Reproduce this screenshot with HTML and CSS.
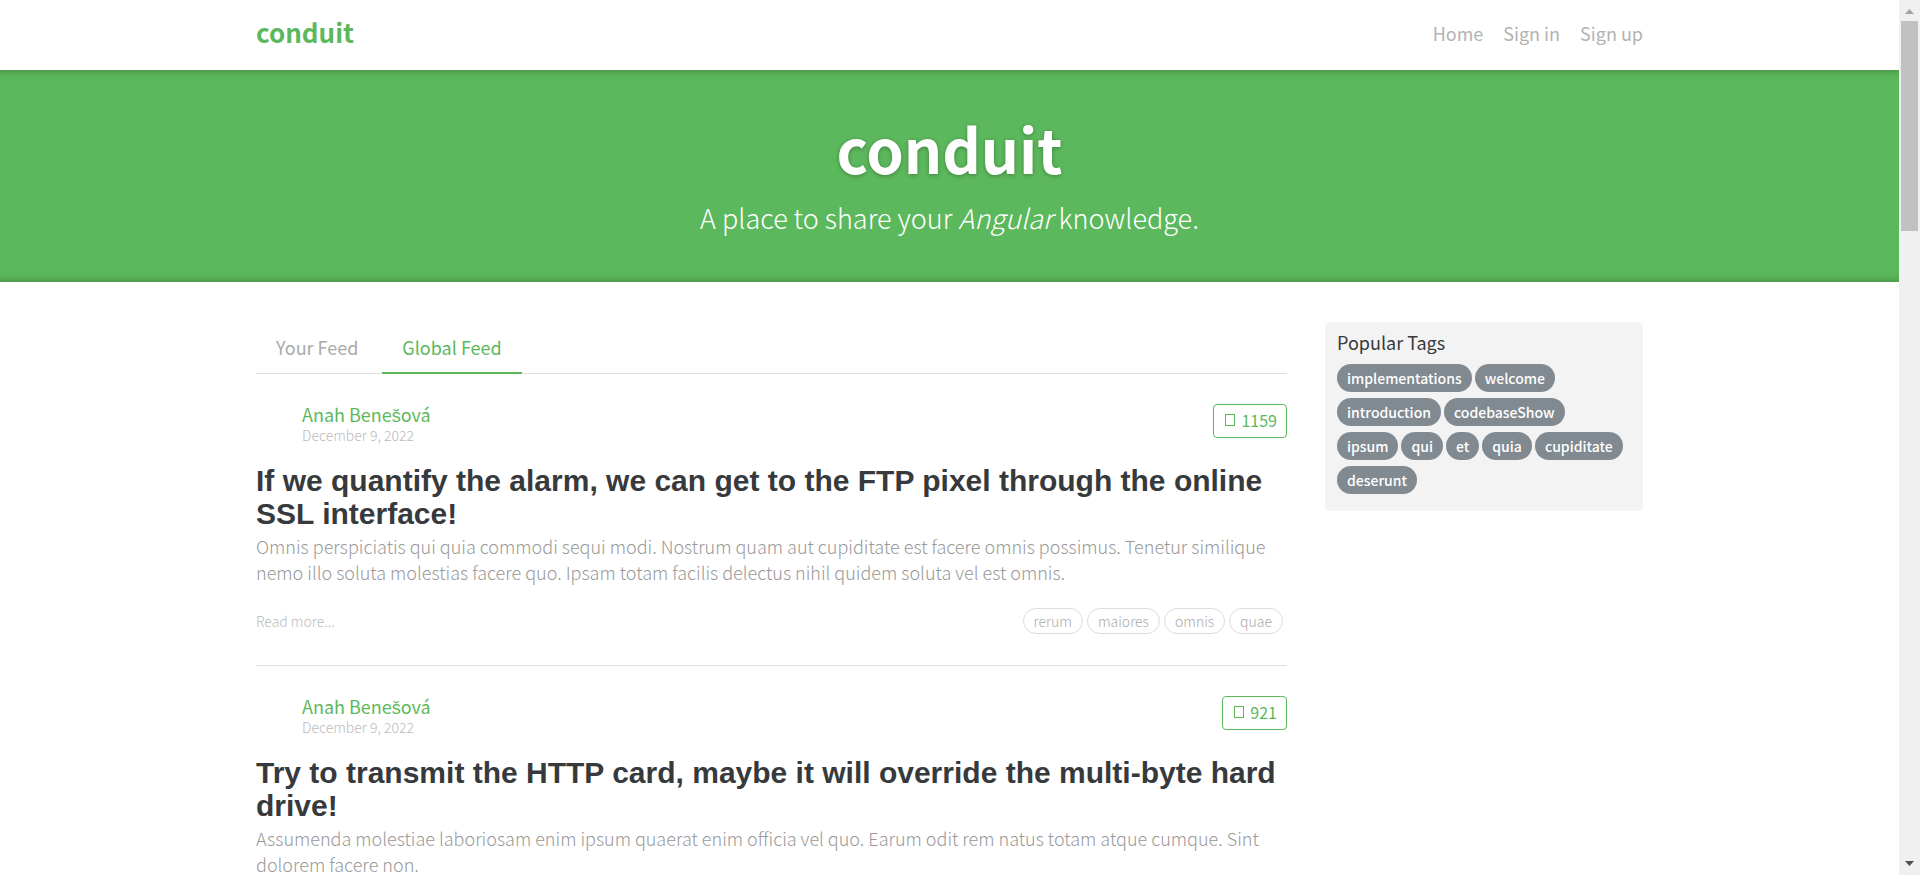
FILE: index.html
```html
<!DOCTYPE html>
<html lang="en">
<head>
<meta charset="utf-8">
<title>Conduit</title>
<link rel="stylesheet" href="styles.css">
</head>
<body>
<div class="page">
  <header class="container navbar">
    <a class="brand" href="#">conduit</a>
    <nav class="nav-links">
      <a href="#">Home</a>
      <a href="#">Sign in</a>
      <a href="#">Sign up</a>
    </nav>
  </header>

  <section class="banner">
    <h1>conduit</h1>
    <p>A place to share your <em>Angular</em> knowledge.</p>
  </section>

  <main class="container columns">
    <div class="feed">
      <nav class="tabs">
        <a class="tab" href="#">Your Feed</a>
        <a class="tab active" href="#">Global Feed</a>
      </nav>

      <article class="preview">
        <div class="meta">
          <div class="info">
            <a class="author" href="#">Anah Bene<span class="caron">š</span>ová</a>
            <span class="date">December 9, 2022</span>
          </div>
          <button class="favorite" type="button"><svg width="10" height="12" viewBox="0 0 10 12" aria-hidden="true"><rect x="0.5" y="0.5" width="9" height="11"/></svg>1159</button>
        </div>
        <h2>If we quantify the alarm, we can get to the FTP pixel through the online SSL interface!</h2>
        <p class="summary">Omnis perspiciatis qui quia commodi sequi modi. Nostrum quam aut cupiditate est facere omnis possimus. Tenetur similique nemo illo soluta molestias facere quo. Ipsam totam facilis delectus nihil quidem soluta vel est omnis.</p>
        <div class="footer">
          <a class="more" href="#">Read more...</a>
          <ul class="tags outline">
            <li>rerum</li>
            <li>maiores</li>
            <li>omnis</li>
            <li>quae</li>
          </ul>
        </div>
      </article>

      <article class="preview">
        <div class="meta">
          <div class="info">
            <a class="author" href="#">Anah Bene<span class="caron">š</span>ová</a>
            <span class="date">December 9, 2022</span>
          </div>
          <button class="favorite" type="button"><svg width="10" height="12" viewBox="0 0 10 12" aria-hidden="true"><rect x="0.5" y="0.5" width="9" height="11"/></svg>921</button>
        </div>
        <h2>Try to transmit the HTTP card, maybe it will override the multi-byte hard drive!</h2>
        <p class="summary">Assumenda molestiae laboriosam enim ipsum quaerat enim officia vel quo. Earum odit rem natus totam atque cumque. Sint dolorem facere non.</p>
      </article>
    </div>

    <aside class="sidebar">
      <p class="sidebar-title">Popular Tags</p>
      <div class="tags filled">
        <a href="#">implementations</a>
        <a href="#">welcome</a>
        <a href="#">introduction</a>
        <a href="#">codebaseShow</a>
        <a href="#">ipsum</a>
        <a href="#">qui</a>
        <a href="#">et</a>
        <a href="#">quia</a>
        <a href="#">cupiditate</a>
        <a href="#">deserunt</a>
      </div>
    </aside>
  </main>
</div>

<div class="scrollbar" aria-hidden="true">
  <svg class="arrow up" width="21" height="21" viewBox="0 0 21 21"><path d="M6 14 10.500 9 15 14z"/></svg>
  <div class="thumb"></div>
  <svg class="arrow down" width="21" height="21" viewBox="0 0 21 21"><path d="M6 7h9l-4.500 5z"/></svg>
</div>
</body>
</html>
```

FILE: styles.css
```css
* {
  box-sizing: border-box;
}

body {
  display: grid;
  grid-template-columns: 1fr 21px;
  height: 100vh;
  margin: 0;
  overflow: hidden;
  background: #fff;
  color: #373a3c;
  font-family: "Noto Sans CJK SC", "Noto Sans", sans-serif;
  font-size: 18px;
  line-height: 26px;
}

a {
  color: inherit;
  text-decoration: none;
}

h1,
h2,
p,
ul {
  margin: 0;
  padding: 0;
}

.page {
  min-width: 0;
  overflow: hidden;
}

.container {
  max-width: 1387px;
  margin: 0 auto;
}

/* Header */
.navbar {
  display: flex;
  justify-content: space-between;
  align-items: flex-start;
  height: 70px;
  padding-top: 10px;
}

.brand {
  color: #5cb85c;
  font-size: 26px;
  font-weight: 700;
  line-height: 44px;
}

.nav-links {
  display: flex;
  gap: 20px;
  color: #b3b3b3;
  line-height: 46px;
}

/* Banner */
.banner {
  padding: 40px 0;
  background: #5cb85c;
  box-shadow: inset 0 10px 10px -10px rgba(0, 0, 0, 0.3), inset 0 -10px 10px -10px rgba(0, 0, 0, 0.3);
  color: #fff;
  text-align: center;
}

.banner h1 {
  margin-bottom: 10px;
  font-size: 60px;
  font-weight: 700;
  line-height: 76px;
  text-shadow: 0 1px 4px rgba(0, 0, 0, 0.3);
}

.banner p {
  padding-bottom: 2px;
  font-size: 27px;
  font-weight: 300;
  line-height: 44px;
}

/* Columns */
.columns {
  display: grid;
  grid-template-columns: minmax(0, 1fr) 318px;
  align-items: start;
  gap: 38px;
  padding-top: 40px;
}

.tabs {
  display: flex;
  gap: 4px;
  box-shadow: inset 0 -1px #e0e0e0;
  color: #aaa;
  line-height: 30px;
}

.tab {
  padding: 10px 20px;
  border-bottom: 2px solid transparent;
}

.tab.active {
  border-color: #5cb85c;
  color: #5cb85c;
}

/* Article previews */
.preview {
  padding: 30px 0;
  border-bottom: 1px solid #e0e0e0;
}

.meta {
  display: flex;
  justify-content: space-between;
  align-items: flex-start;
  margin-bottom: 20px;
}

.info {
  display: flex;
  flex-direction: column;
  padding-left: 46px;
  line-height: 20px;
}

.author {
  color: #5cb85c;
}

.caron {
  font-family: "Liberation Sans", sans-serif;
}

.date,
.more {
  color: #bbb;
  font-size: 14px;
  font-weight: 300;
}

.date {
  line-height: 18px;
}

.favorite {
  display: flex;
  align-items: center;
  gap: 6px;
  height: 34px;
  padding: 0 9px 2px 11px;
  border: 1px solid #5cb85c;
  border-radius: 4px;
  background: none;
  color: #5cb85c;
  font-family: inherit;
  font-size: 16px;
}

.favorite rect {
  fill: none;
  stroke: currentColor;
}

.preview h2 {
  margin-bottom: 3px;
  font-family: "Liberation Sans", Arial, sans-serif;
  font-size: 30px;
  font-weight: 700;
  line-height: 33px;
}

.summary {
  margin-bottom: 23px;
  color: #999;
  font-weight: 300;
}

.footer {
  display: flex;
  justify-content: space-between;
  align-items: center;
  padding-bottom: 1px;
}

/* Tags */
.tags {
  display: flex;
  flex-wrap: wrap;
  list-style: none;
  font-size: 14px;
}

.outline {
  gap: 4px;
  padding-right: 4px;
  color: #aaa;
  font-weight: 300;
}

.outline li {
  padding: 0 10px;
  border: 1px solid #ddd;
  border-radius: 13px;
  line-height: 24px;
}

.filled {
  gap: 6px 3px;
  color: #fff;
}

.filled a {
  padding: 0 10px;
  border-radius: 14px;
  background: #818a91;
  font-weight: 500;
  line-height: 28px;
}

.sidebar {
  padding: 7px 17px 17px 12px;
  border-radius: 5px;
  background: #f3f3f3;
}

.sidebar-title {
  margin-bottom: 9px;
}

/* Scrollbar */
.scrollbar {
  display: flex;
  flex-direction: column;
  background: #f0f0f0;
}

.thumb {
  height: 24vh;
  margin: 0 2px;
  background: #c1c1c1;
}

.arrow {
  flex: none;
}

.up {
  fill: #a3a3a3;
}

.down {
  margin-top: auto;
  fill: #505050;
}
```
